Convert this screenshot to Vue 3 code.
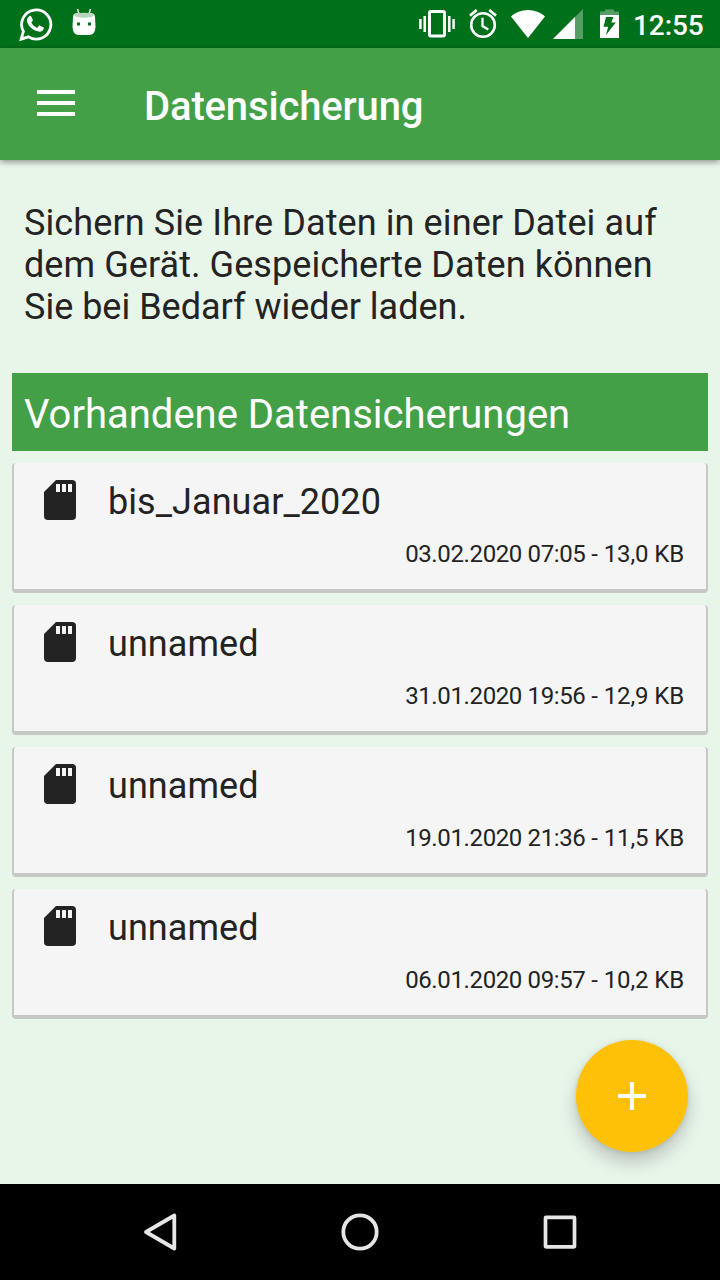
<script setup>
const intro = [
  { text: 'Sichern Sie Ihre Daten in einer Datei auf ', tracking: '0.1px' },
  { text: 'dem Gerät. Gespeicherte Daten können ', tracking: '0.07px' },
  { text: 'Sie bei Bedarf wieder laden.', tracking: '0px' },
]
const backups = [
  { name: 'bis_Januar_2020', date: '03.02.2020 07:05', size: '13,0 KB' },
  { name: 'unnamed', date: '31.01.2020 19:56', size: '12,9 KB' },
  { name: 'unnamed', date: '19.01.2020 21:36', size: '11,5 KB' },
  { name: 'unnamed', date: '06.01.2020 09:57', size: '10,2 KB' },
]
</script>

<template>
  <div class="screen">
    <div class="status">
      <svg class="whatsapp" width="36" height="48" viewBox="18 0 36 48">
        <path d="M22.2 39.2 24.4 31.5A14.6 14.6 0 1 1 29.5 36.9Z" fill="none" stroke="#fff" stroke-width="2.8" />
        <path d="M30.3 16.2c.6-.5 1.500-.5 1.900.2l1.600 3.400c.2.6 0 1-.4 1.500l-1.100 1.300c1.300 2.500 3.200 4.200 5.800 5.300l1.600-1.900c.4-.5.8-.5 1.300-.3l3.300 1.600c.6.3.6.7.4 1.500-.7 2.200-2.900 3.200-5.100 2.800-5.700-1.200-10-5-11.500-9.800-.6-2.200.5-4.400 2.200-5.600Z" fill="#fff" />
      </svg>
      <svg class="robot" width="26" height="48" viewBox="71 0 26 48">
        <path d="M77.500 9 79.300 15M90.500 9 88.700 15" stroke="#d4e8d7" stroke-width="1.600" />
        <path d="M73 17Q73 13 78 13H90Q95 13 95 17L95.500 26Q95.500 35 89 35H79Q72.500 35 72.500 26Z" fill="#fff" />
        <path d="M74 15Q75 12.700 84 12.700T94 15Q93 17.700 84 17.700T74 15Z" fill="#b5d6ba" />
        <rect x="77" y="22.500" width="3" height="3" fill="#00701a" />
        <rect x="88" y="22.500" width="3" height="3" fill="#00701a" />
      </svg>
      <div class="grow"></div>
      <svg width="180" height="48" viewBox="416 0 180 48" class="signals">
        <rect x="429.500" y="11.500" width="15" height="24.500" rx="1.500" fill="none" stroke="#fff" stroke-width="3" />
        <path d="M420.400 19V29M424.700 16V32M449.300 16V32M453.600 19V29" stroke="#fff" stroke-width="2.500" />
        <circle cx="483" cy="25" r="11.800" fill="none" stroke="#fff" stroke-width="2.600" />
        <path d="M482.500 17.800V26L488.300 29.500" fill="none" stroke="#fff" stroke-width="2.300" />
        <path d="M470 15.600 476.700 10M496 15.600 489.300 10" stroke="#fff" stroke-width="2.700" />
        <path d="M528 38 511 16.500Q518 10 528 10T545 16.500Z" fill="#fff" />
        <path d="M553 39 583 9V39Z" fill="#579e66" />
        <path d="M553 39 575 17V39Z" fill="#fff" />
      </svg>
      <svg class="battery" width="20" height="48" viewBox="600 0 20 48">
        <path d="M600 15V11.500H605V9.500H614V11.500H619V15Z" fill="#579e66" />
        <rect x="600" y="15" width="19" height="23" fill="#fff" />
        <path d="M606 17H613.500L611.300 22.500H615.800L605.800 35.300 608.200 26.800H603.500Z" fill="#00701a" />
      </svg>
      <span class="time">12:55</span>
    </div>

    <header class="toolbar">
      <div class="menu"><i></i><i></i><i></i></div>
      <h1>Datensicherung</h1>
    </header>

    <main>
      <p class="intro"><span v-for="line in intro" :key="line.text" :style="{ letterSpacing: line.tracking }">{{ line.text }}</span></p>
      <h2>Vorhandene Datensicherungen</h2>
      <div class="list">
        <article v-for="(b, i) in backups" :key="i" class="card">
          <div class="row">
            <svg width="32" height="40" viewBox="0 0 32 40">
              <path d="M12 0H28Q32 0 32 4V36Q32 40 28 40H4Q0 40 0 36V12Z" fill="#232323" />
              <path d="M12 4H16V12H12ZM18 4H22V12H18ZM24 4H28V12H24Z" fill="#f5f5f5" />
            </svg>
            <span class="name">{{ b.name }}</span>
          </div>
          <div class="info"><span class="date">{{ b.date }}</span> - {{ b.size }}</div>
        </article>
      </div>
      <button class="fab" aria-label="+">
        <svg width="28" height="28" viewBox="0 0 28 28"><path d="M14 0V28M0 14H28" stroke="#fff" stroke-width="4" /></svg>
      </button>
    </main>

    <nav>
      <svg width="40" height="40" viewBox="140 1212 40 40"><path d="M146 1232 174.300 1215.500V1248.500Z" fill="none" stroke="#e6e6e6" stroke-width="3.800" stroke-linejoin="round" /></svg>
      <svg width="40" height="40" viewBox="340 1212 40 40"><circle cx="360" cy="1232" r="16.700" fill="none" stroke="#e6e6e6" stroke-width="3.800" /></svg>
      <svg width="40" height="40" viewBox="540 1212 40 40"><rect x="545.500" y="1217.300" width="29" height="29.500" rx=".6" fill="none" stroke="#e6e6e6" stroke-width="3.700" /></svg>
    </nav>
  </div>
</template>

<style>
body { margin: 0; }
</style>

<style scoped>
.screen {
  width: 720px;
  height: 1280px;
  display: flex;
  flex-direction: column;
  overflow: hidden;
  background: #e8f5e9;
  color: #232323;
  font-family: Roboto, "Liberation Sans", sans-serif;
}
svg { display: block; flex: none; }
.status {
  height: 48px;
  flex: none;
  box-sizing: border-box;
  padding: 0 15px 0 17px;
  display: flex;
  align-items: center;
  background: #00701a;
}
.robot { margin-left: 18px; }
.grow { flex: 1; }
.battery { margin-left: 4px; }
.time {
  width: 72px;
  margin-left: 13px;
  padding-top: 3px;
  color: #fff;
  font-size: 28px;
  font-weight: 500;
  line-height: 35px;
  letter-spacing: -.1px;
  white-space: nowrap;
}
.toolbar {
  height: 112px;
  flex: none;
  box-sizing: border-box;
  padding-left: 37px;
  display: flex;
  align-items: center;
  background: #43a047;
  box-shadow: 0 2px 6px rgba(0, 0, 0, .4);
  z-index: 1;
}
.menu {
  width: 38px;
  display: grid;
  gap: 7px;
  padding-bottom: 2px;
}
.menu i { height: 4px; background: #fff; }
h1 {
  margin: 5px 0 0 69px;
  color: #fff;
  font-size: 40px;
  font-weight: 500;
  line-height: 48px;
  letter-spacing: -.14px;
}
main {
  position: relative;
  flex: 1;
  box-sizing: border-box;
  padding: 42px 12px 0;
}
.intro {
  margin: 0;
  padding: 0 12px;
  font-size: 36px;
  line-height: 42px;
}
.intro span { display: block; white-space: nowrap; }
h2 {
  height: 78px;
  margin: 45px 0 12px;
  box-sizing: border-box;
  padding: 18px 12px 0;
  background: #43a047;
  color: #fff;
  font-size: 40px;
  font-weight: 400;
  line-height: 47px;
}
.list { display: grid; gap: 12px; }
.card {
  height: 130px;
  box-sizing: border-box;
  border: solid #c5c8c5;
  border-width: 0 2px 4px;
  border-radius: 4px;
  background: #f5f5f5;
  padding: 17px 22px 0 30px;
}
.row { display: flex; align-items: center; height: 40px; }
.name { margin-left: 32px; font-size: 36px; line-height: 42px; padding-top: 3px; letter-spacing: .07px; }
.info { margin-top: 20px; text-align: right; font-size: 24px; line-height: 28px; letter-spacing: -.12px; }
.date { letter-spacing: -.37px; }
.fab {
  position: absolute;
  right: 32px;
  bottom: 32px;
  width: 112px;
  height: 112px;
  padding: 0;
  border: 0;
  border-radius: 50%;
  display: grid;
  place-items: center;
  background: #ffc107;
  box-shadow: 0 10px 18px rgba(0, 0, 0, .2), 0 1px 5px rgba(0, 0, 0, .1);
}
nav {
  height: 96px;
  flex: none;
  display: flex;
  align-items: center;
  justify-content: center;
  gap: 160px;
  background: #000;
}
</style>
